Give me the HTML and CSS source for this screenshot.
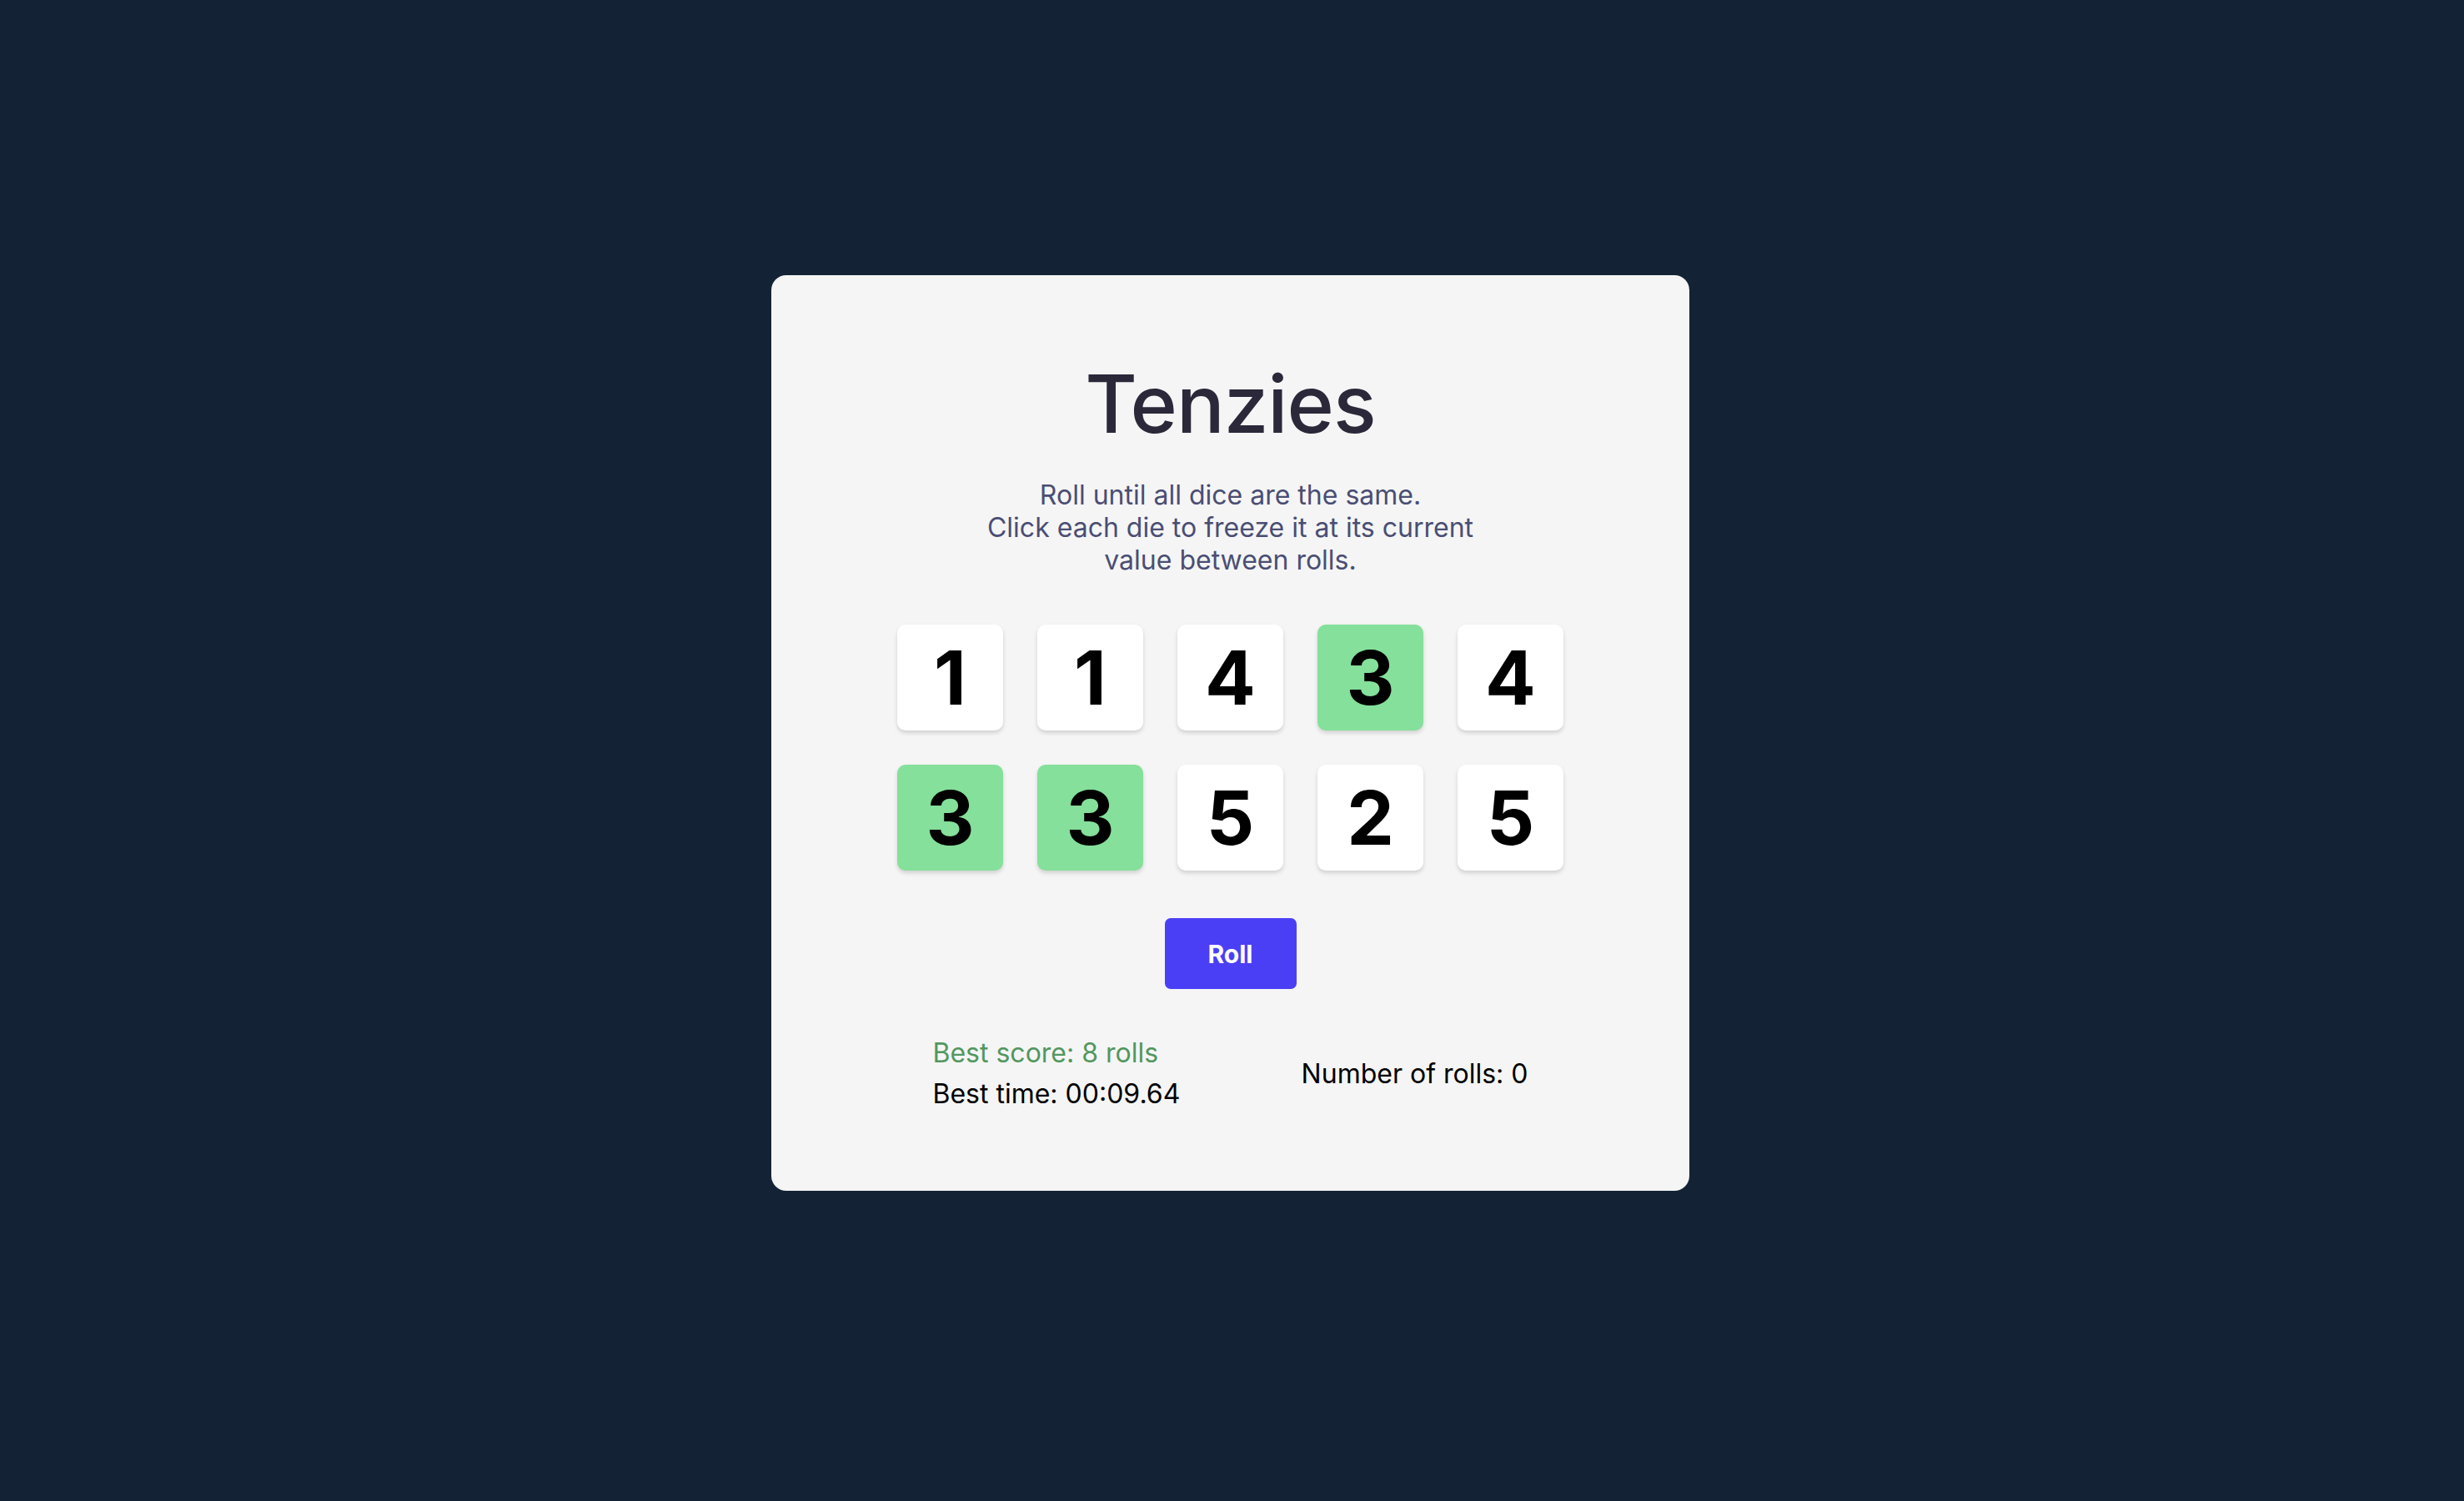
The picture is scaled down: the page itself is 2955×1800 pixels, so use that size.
FILE: index.html
```html
<!DOCTYPE html>
<html lang="en">
<head>
<meta charset="utf-8">
<title>Tenzies</title>
<link rel="stylesheet" href="styles.css">
</head>
<body>
<main class="card">
  <h1 class="title">Tenzies</h1>
  <p class="instructions">Roll until all dice are the same.<br>Click each die to freeze it at its current<br>value between rolls.</p>
  <div class="dice">
    <button class="die">1</button>
    <button class="die">1</button>
    <button class="die">4</button>
    <button class="die held">3</button>
    <button class="die">4</button>
    <button class="die held">3</button>
    <button class="die held">3</button>
    <button class="die">5</button>
    <button class="die">2</button>
    <button class="die">5</button>
  </div>
  <button class="roll">Roll</button>
  <div class="stats">
    <div class="best">
      <p class="stat best-score">Best score: 8 rolls</p>
      <p class="stat">Best time: 00:09.64</p>
    </div>
    <p class="stat">Number of rolls: 0</p>
  </div>
</main>
</body>
</html>
```
FILE: styles.css
```css
* { box-sizing: border-box; }
html, body { margin: 0; }
body {
  min-height: 1800px;
  background: #132335;
  font-family: Inter, "Noto Sans", sans-serif;
  display: flex;
  flex-direction: column;
  align-items: center;
  padding: 330px 4px 0 0;
}
.card {
  width: 1101px;
  height: 1098px;
  background: #f5f5f5;
  border-radius: 18px;
  display: flex;
  flex-direction: column;
  align-items: center;
  padding: 94px 0 0;
}
.title {
  margin: 0;
  font-size: 96px;
  font-weight: 500;
  line-height: 121px;
  color: #2b283a;
  letter-spacing: -1px;
}
.instructions {
  margin: 29px 0 0;
  font-size: 32px;
  line-height: normal;
  color: #4a4e74;
  text-align: center;
}
.dice {
  margin-top: 58px;
  display: grid;
  grid-template-columns: repeat(5, 127px);
  grid-auto-rows: 127px;
  gap: 41px;
}
.die {
  border: none;
  padding: 0;
  border-radius: 10px;
  background: #ffffff;
  box-shadow: 0 3px 5px rgba(0, 0, 0, 0.15);
  font-family: Inter, "Noto Sans", sans-serif;
  font-size: 90px;
  font-weight: 700;
  color: #000;
  display: flex;
  align-items: center;
  justify-content: center;
  line-height: 1;
}
.die.held { background: #84e09a; }
.roll {
  margin-top: 57px;
  width: 158px;
  height: 85px;
  border: none;
  border-radius: 7px;
  background: #4b3ff6;
  color: #fff;
  font-family: Inter, "Noto Sans", sans-serif;
  font-size: 30px;
  font-weight: 700;
}
.stats {
  margin-top: 52px;
  width: 714px;
  display: flex;
  justify-content: space-between;
  align-items: center;
}
.stat {
  margin: 0;
  font-size: 32px;
  line-height: 49px;
  color: #000;
}
.best-score { color: #52975f; }
```
